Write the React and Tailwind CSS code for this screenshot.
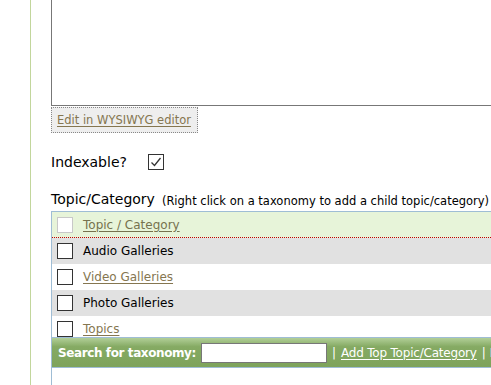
const linkColor = 'text-[#857650]';

const rows = [
  { label: 'Audio Galleries', link: false, shaded: true },
  { label: 'Video Galleries', link: true, shaded: false },
  { label: 'Photo Galleries', link: false, shaded: true },
  { label: 'Topics', link: true, shaded: false },
];

function Box({ muted }) {
  return (
    <span
      className={
        'block h-[16px] w-[16px] shrink-0 bg-white border ' +
        (muted ? 'border-[#c8c8c8]' : 'border-[#333]')
      }
    />
  );
}

function TaxonomyRow({ label, link, shaded }) {
  return (
    <div
      className={
        'flex h-[26px] shrink-0 items-center pl-[5px] ' +
        (shaded ? 'bg-[#e1e1e1]' : 'bg-white')
      }
    >
      <Box />
      <span
        className={
          'ml-[10px] text-[12px] ' +
          (link ? linkColor + ' underline underline-offset-2' : 'text-black')
        }
      >
        {label}
      </span>
    </div>
  );
}

export default function App() {
  return (
    <div
      className="flex h-[385px] w-[491px] overflow-hidden bg-white"
      style={{ fontFamily: '"DejaVu Sans", Verdana, sans-serif' }}
    >
      <div className="w-[30px] shrink-0" />
      <div className="flex min-w-0 flex-1 flex-col overflow-hidden border-l border-[#c2d69c] pl-[20px]">
        {/* textarea, scrolled so only its bottom shows */}
        <div className="h-[106px] w-[600px] shrink-0 border-b border-l border-[#777]" />

        <div className="mt-[1px] flex h-[26px] w-[147px] shrink-0 items-center border border-dotted border-[#888] bg-[#eeeeee] pl-[5px] pt-[2px]">
          <span className={'text-[11.5px] underline underline-offset-2 ' + linkColor}>
            Edit in WYSIWYG editor
          </span>
        </div>

        <div className="mt-[20px] flex h-[18px] shrink-0 items-center">
          <span className="text-[14px] text-black">Indexable?</span>
          <span className="ml-[21px] flex h-[16px] w-[16px] items-center justify-center border border-[#333] bg-white">
            <svg width="12" height="12" viewBox="0 0 12 12" fill="none">
              <path d="M1.5 6.5 L4.5 9.5 L10.5 2" stroke="#333" strokeWidth="1.3" />
            </svg>
          </span>
        </div>

        <div className="mt-[21px] flex h-[18px] shrink-0 items-end whitespace-nowrap text-black">
          <span className="text-[14px]">Topic/Category</span>
          <span className="ml-[7px] text-[11.5px]">
            (Right click on a taxonomy to add a child topic/category)
          </span>
        </div>

        <div className="mt-[1px] flex w-[600px] shrink-0 flex-col border-l border-t border-[#9fbdd5]">
          <div className="flex h-[26px] items-center border-b border-dotted border-[#c00000] bg-[#e7f4d9] pl-[5px]">
            <Box muted />
            <span className="ml-[10px] text-[12px] text-[#76724e] underline underline-offset-2">
              Topic / Category
            </span>
          </div>
          <div className="flex h-[99px] flex-col overflow-hidden">
            {rows.map((r) => (
              <TaxonomyRow key={r.label} {...r} />
            ))}
          </div>
          <div className="flex h-[31px] items-center whitespace-nowrap border-y border-[#9fbdd5] bg-gradient-to-b from-[#b2cf98] via-[#85aa63] via-30% to-[#7ea35b] pl-[6px] text-[12px] text-white">
            <span className="font-bold tracking-[-0.4px]">Search for taxonomy:</span>
            <input
              type="text"
              className="ml-[5px] h-[20px] w-[126px] border border-[#777] bg-white"
            />
            <span className="ml-[5px]">|</span>
            <span className="ml-[5px] tracking-[-0.2px] underline underline-offset-2">
              Add Top Topic/Category
            </span>
            <span className="ml-[5px]">|</span>
            <span className="ml-[4px]">Expand</span>
          </div>
          <div className="h-[30px] bg-white" />
        </div>
      </div>
    </div>
  );
}
